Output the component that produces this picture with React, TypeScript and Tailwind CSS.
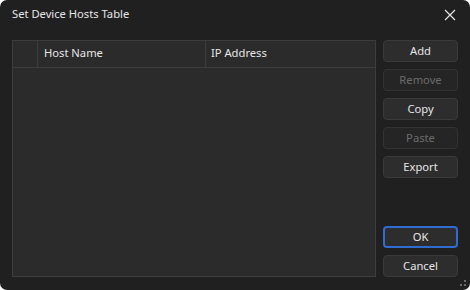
export default function App() {
  const buttons = [
    { label: 'Add', disabled: false },
    { label: 'Remove', disabled: true },
    { label: 'Copy', disabled: false },
    { label: 'Paste', disabled: true },
    { label: 'Export', disabled: false },
  ];

  return (
    <div className="w-[470px] h-[290px] bg-white">
      <div
        className="relative w-full h-full bg-[#202020] rounded-[7px] text-[#e6e6e6] text-[11.2px] flex flex-col"
        style={{ fontFamily: '"Noto Sans", "Open Sans", sans-serif' }}
      >
        {/* title bar */}
        <div className="h-[40px] flex items-start justify-between pl-3 pr-[14px] pt-[5px]">
          <span className="leading-[18px]">Set Device Hosts Table</span>
          <svg width="12" height="12" viewBox="0 0 12 12" className="mt-[4px]">
            <path d="M1 1 L11 11 M11 1 L1 11" stroke="#e6e6e6" strokeWidth="1.2" />
          </svg>
        </div>

        <div className="flex-1 flex px-3 pb-[13px] gap-[7px]">
          {/* table */}
          <div className="w-[364px] h-[237px] border border-[#3d3d3d] bg-[#2b2b2b] flex flex-col">
            <div className="h-[27px] flex border-b border-[#3d3d3d]">
              <div className="w-[25px] border-r border-[#3d3d3d]" />
              <div className="w-[168px] border-r border-[#3d3d3d] flex items-center pl-[6px] pb-[1px]">Host Name</div>
              <div className="flex-1 flex items-center pl-[5px] pb-[1px]">IP Address</div>
            </div>
            <div className="flex-1" />
          </div>

          {/* buttons */}
          <div className="w-[75px] flex flex-col">
            <div className="flex flex-col gap-[7px]">
              {buttons.map((b) => (
                <button
                  key={b.label}
                  className={
                    b.disabled
                      ? 'h-[22px] rounded-[4px] border border-[#333333] bg-[#252525] text-[#6b6b6b] leading-none pb-[1px]'
                      : 'h-[22px] rounded-[4px] border border-[#3a3a3a] bg-[#2d2d2d] text-[#e6e6e6] leading-none pb-[1px]'
                  }
                >
                  {b.label}
                </button>
              ))}
            </div>
            <div className="mt-auto flex flex-col gap-[7px]">
              <button className="h-[22px] rounded-[4px] border-2 border-[#2f6bd1] bg-[#2d2d2d] text-[#e6e6e6] leading-none pb-[1px]">
                OK
              </button>
              <button className="h-[22px] rounded-[4px] border border-[#3a3a3a] bg-[#2d2d2d] text-[#e6e6e6] leading-none pb-[1px]">
                Cancel
              </button>
            </div>
          </div>
        </div>

        {/* resize grip */}
        <svg width="8" height="8" viewBox="0 0 8 8" className="absolute right-[2px] bottom-[2px]">
          <rect x="4" y="0" width="2" height="2" fill="#6a6a6a" />
          <rect x="0" y="4" width="2" height="2" fill="#6a6a6a" />
          <rect x="4" y="4" width="2" height="2" fill="#6a6a6a" />
        </svg>
      </div>
    </div>
  );
}
